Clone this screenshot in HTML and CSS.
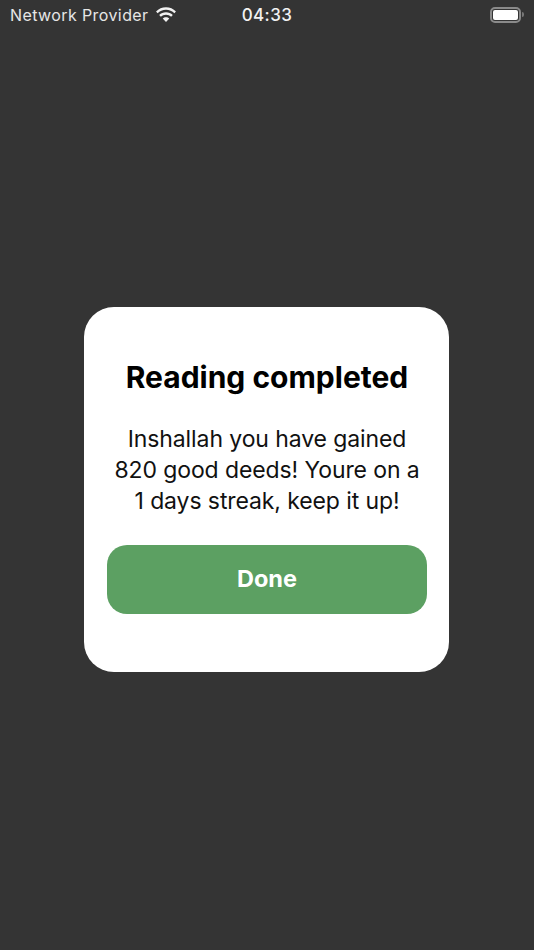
FILE: index.html
```html
<!DOCTYPE html>
<html lang="en">
<head>
    <meta charset="UTF-8"/>
    <title>Reading completed</title>
    <link rel="stylesheet" href="styles.css">
</head>
<body>
<div class="status">
    <div class="status-left">
        <span class="carrier">Network Provider</span>
        <svg class="wifi" width="22" height="16" viewBox="0 0 21 15">
            <path d="M10.500 2.600c3.100 0 5.900 1.200 8 3.200l1.500-1.600C17.500 1.700 14.200.2 10.500.2S3.500 1.700 1 4.200l1.500 1.600c2.100-2 4.900-3.200 8-3.200z" fill="#f2f2f2"/>
            <path d="M10.500 7.200c1.900 0 3.600.7 4.900 1.900l1.600-1.600c-1.700-1.600-4-2.600-6.500-2.600s-4.800 1-6.500 2.600l1.600 1.600c1.300-1.200 3-1.900 4.900-1.900z" fill="#f2f2f2"/>
            <path d="M10.500 9.700c-1.200 0-2.300.5-3.100 1.200l3.100 3.300 3.100-3.300c-.8-.7-1.900-1.200-3.100-1.200z" fill="#f2f2f2"/>
        </svg>
    </div>
    <span class="time">04:33</span>
    <div class="battery">
        <div class="battery-body"><div class="battery-fill"></div></div>
        <div class="battery-cap"></div>
    </div>
</div>
<div class="stage">
    <div class="dialog">
        <h1 class="dialog-title">Reading completed</h1>
        <p class="dialog-text">Inshallah you have gained 820 good deeds! Youre on a 1 days streak, keep it up!</p>
        <a class="dialog-btn" href="#">Done</a>
    </div>
</div>
</body>
</html>
```

FILE: styles.css
```css
html,body{margin:0;padding:0;}
body{background:#343434;height:950px;overflow:hidden;font-family:Inter,"Liberation Sans",sans-serif;display:flex;flex-direction:column;}
.status{height:29px;display:grid;grid-template-columns:1fr auto 1fr;align-items:center;padding:0 10px;color:#f2f2f2;}
.status-left{display:flex;align-items:center;gap:7px;}
.carrier{font-size:16px;letter-spacing:.4px;color:#e6e6e6;}
.time{font-size:17px;font-weight:500;letter-spacing:.4px;}
.wifi{display:block;}
.battery{justify-self:end;display:flex;align-items:center;gap:1px;}
.battery-body{width:25px;height:10px;border:2px solid #8a8a8a;border-radius:5px;padding:1px;}
.battery-fill{height:100%;background:#fff;border-radius:2px;}
.battery-cap{width:2px;height:5px;background:#777;border-radius:0 2px 2px 0;}
.stage{flex:1;display:flex;justify-content:center;padding:278px 1px 0 0;}
.dialog{width:365px;height:365px;box-sizing:border-box;background:#fff;border-radius:30px;padding:0 22px 0 23px;display:flex;flex-direction:column;align-items:center;}
.dialog-title{margin:50px 0 0;font-size:30px;line-height:40px;font-weight:700;color:#000;white-space:nowrap;}
.dialog-text{margin:27px 0 0;width:310px;font-size:23px;line-height:31px;letter-spacing:-.1px;text-align:center;color:#111;}
.dialog-btn{margin-top:28px;width:100%;height:69px;background:#5ca062;border-radius:20px;color:#fff;font-size:23.5px;font-weight:700;line-height:68px;text-align:center;text-decoration:none;}
```
